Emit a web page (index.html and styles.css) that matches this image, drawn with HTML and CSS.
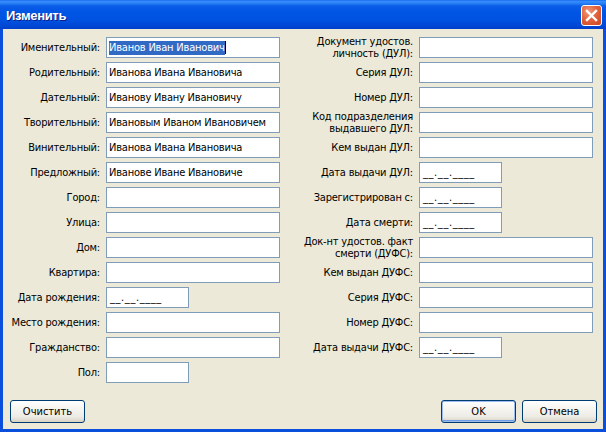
FILE: index.html
```html
<!DOCTYPE html>
<html lang="ru">
<head>
<meta charset="utf-8">
<title>Изменить</title>
<link rel="stylesheet" href="styles.css">
</head>
<body>
<div class="window">
  <div class="titlebar">
    <span class="title">Изменить</span>
    <span class="close" aria-label="Закрыть">
      <svg width="13" height="13" viewBox="0 0 13 13"><path d="M2 2 L11 11 M11 2 L2 11" stroke="#fff" stroke-width="2.4" stroke-linecap="square"/></svg>
    </span>
  </div>
  <div class="client">
    <div class="form">
      <div class="col col-left">
        <div class="lbl">Именительный:</div><div class="field"><span class="sel">Иванов Иван Иванович</span><span class="caret"></span></div>
        <div class="lbl">Родительный:</div><div class="field">Иванова Ивана Ивановича</div>
        <div class="lbl">Дательный:</div><div class="field">Иванову Ивану Ивановичу</div>
        <div class="lbl">Творительный:</div><div class="field">Ивановым Иваном Ивановичем</div>
        <div class="lbl">Винительный:</div><div class="field">Иванова Ивана Ивановича</div>
        <div class="lbl">Предложный:</div><div class="field">Иванове Иване Ивановиче</div>
        <div class="lbl">Город:</div><div class="field"></div>
        <div class="lbl">Улица:</div><div class="field"></div>
        <div class="lbl">Дом:</div><div class="field"></div>
        <div class="lbl">Квартира:</div><div class="field"></div>
        <div class="lbl">Дата рождения:</div><div class="field date">__.__.____</div>
        <div class="lbl">Место рождения:</div><div class="field"></div>
        <div class="lbl">Гражданство:</div><div class="field"></div>
        <div class="lbl">Пол:</div><div class="field date"></div>
      </div>
      <div class="col col-right">
        <div class="lbl two">Документ удостов.<br>личность (ДУЛ):</div><div class="field"></div>
        <div class="lbl">Серия ДУЛ:</div><div class="field"></div>
        <div class="lbl">Номер ДУЛ:</div><div class="field"></div>
        <div class="lbl two">Код подразделения<br>выдавшего ДУЛ:</div><div class="field"></div>
        <div class="lbl">Кем выдан ДУЛ:</div><div class="field"></div>
        <div class="lbl">Дата выдачи ДУЛ:</div><div class="field date">__.__.____</div>
        <div class="lbl">Зарегистрирован с:</div><div class="field date">__.__.____</div>
        <div class="lbl">Дата смерти:</div><div class="field date">__.__.____</div>
        <div class="lbl two">Док-нт удостов. факт<br>смерти (ДУФС):</div><div class="field"></div>
        <div class="lbl">Кем выдан ДУФС:</div><div class="field"></div>
        <div class="lbl">Серия ДУФС:</div><div class="field"></div>
        <div class="lbl">Номер ДУФС:</div><div class="field"></div>
        <div class="lbl">Дата выдачи ДУФС:</div><div class="field date">__.__.____</div>
      </div>
    </div>
    <div class="footer">
      <button class="btn">Очистить</button>
      <div class="spacer"></div>
      <button class="btn default">OK</button>
      <button class="btn">Отмена</button>
    </div>
  </div>
</div>
</body>
</html>
```
FILE: styles.css
```css
html, body {
  margin: 0;
  padding: 0;
  background: #ece9d8;
}
.window {
  width: 606px;
  height: 432px;
  box-sizing: border-box;
  display: flex;
  flex-direction: column;
  background: #0a4fdc;
  font-family: "DejaVu Sans Condensed", "DejaVu Sans", sans-serif;
  font-size: 11px;
  letter-spacing: -0.2px;
  color: #000;
}
.titlebar {
  height: 29px;
  flex: none;
  display: flex;
  align-items: center;
  padding: 0 4px 0 6px;
  background: linear-gradient(to bottom, #0a5fe8 0px, #3a8dfb 1px, #2c84f8 3px, #0a5de6 6px, #0055e5 12px, #0052e0 20px, #0048d4 26px, #003fc8 29px);
}
.title {
  flex: 1;
  color: #fff;
  font-family: "Liberation Sans", Arial, sans-serif;
  font-weight: bold;
  font-size: 13px;
  letter-spacing: -0.3px;
  text-shadow: 1px 1px 0 #0a1e8c;
  padding-top: 1px;
}
.close {
  width: 19px;
  height: 19px;
  border: 1px solid #fff;
  border-radius: 3px;
  display: flex;
  align-items: center;
  justify-content: center;
  background: radial-gradient(circle at 35% 30%, #ef9a7c 0%, #e2643f 45%, #cc4521 100%);
  margin-top: 1px;
}
.client {
  flex: 1;
  margin: 0 3px 3px 3px;
  background: #ece9d8;
  display: flex;
  flex-direction: column;
}
.form {
  display: flex;
  gap: 7px;
  padding-top: 8px;
}
.col {
  display: grid;
  column-gap: 6px;
  row-gap: 4px;
  grid-auto-rows: 21px;
  align-items: center;
}
.col-left {
  grid-template-columns: 97px 174px;
}
.col-right {
  grid-template-columns: 126px 174px;
}
.lbl {
  text-align: right;
  white-space: nowrap;
  line-height: 12px;
}
.field {
  box-sizing: border-box;
  height: 21px;
  width: 174px;
  background: #fff;
  border: 1px solid #7f9db9;
  padding: 0 2px;
  line-height: 19px;
  white-space: nowrap;
  overflow: hidden;
  display: flex;
  align-items: center;
}
.field.date {
  width: 83px;
  padding-left: 3px;
  letter-spacing: 0.6px;
}
.sel {
  background: #316ac5;
  color: #fff;
  line-height: 14px;
}
.caret {
  display: inline-block;
  width: 1px;
  height: 13px;
  background: #000;
}
.footer {
  margin-top: auto;
  display: flex;
  gap: 6px;
  padding: 0 6px 6px 7px;
}
.spacer {
  flex: 1;
}
.btn {
  width: 75px;
  height: 23px;
  box-sizing: border-box;
  border: 1px solid #003c74;
  border-radius: 3px;
  background: linear-gradient(to bottom, #ffffff 0%, #f5f4ef 40%, #ecebe4 75%, #d8d2c5 100%);
  font-family: "DejaVu Sans Condensed", "DejaVu Sans", sans-serif;
  font-size: 11px;
  color: #000;
  padding: 0;
}
.btn.default {
  box-shadow: inset 0 0 0 1px #9cbcf0, inset 0 -1px 0 1px #6e9be3;
}
```
